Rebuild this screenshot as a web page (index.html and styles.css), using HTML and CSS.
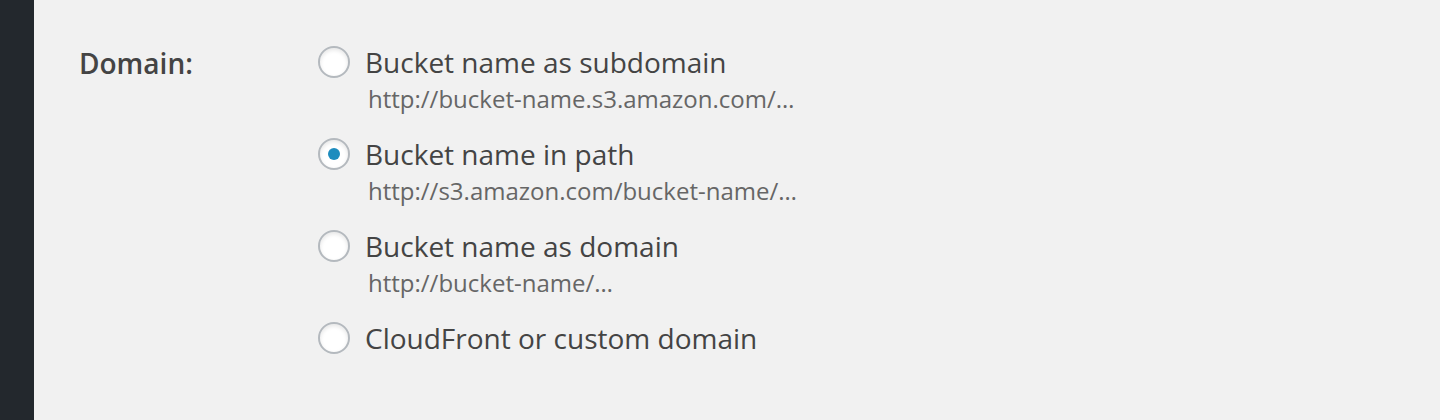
FILE: index.html
```html
<!DOCTYPE html>
<html lang="en">

<head>
  <meta charset="UTF-8">
  <meta name="viewport" content="width=device-width, initial-scale=1.0">
  <title>Domain settings</title>
  <link rel="stylesheet" href="styles.css">
</head>

<body>
  <div id="wrap">
    <div id="sidebar"></div>
    <div id="content">
      <div class="field">
        <div class="field-label">Domain:</div>
        <div class="options">
          <label class="option">
            <span class="row"><input type="radio" name="domain" class="radio"> Bucket name as subdomain</span>
            <span class="desc">http://bucket-name.s3.amazon.com/…</span>
          </label>
          <label class="option">
            <span class="row"><input type="radio" name="domain" class="radio" checked> Bucket name in path</span>
            <span class="desc">http://s3.amazon.com/bucket-name/…</span>
          </label>
          <label class="option">
            <span class="row"><input type="radio" name="domain" class="radio"> Bucket name as domain</span>
            <span class="desc">http://bucket-name/…</span>
          </label>
          <label class="option">
            <span class="row"><input type="radio" name="domain" class="radio"> CloudFront or custom domain</span>
          </label>
        </div>
      </div>
    </div>
  </div>
</body>

</html>
```

FILE: styles.css
```css
body {
  margin: 0;
  background-color: #f1f1f1;
  font-family: 'Open Sans', 'Noto Sans', sans-serif;
  color: #444;
}

#wrap {
  display: flex;
  height: 420px;
}

#sidebar {
  width: 34px;
  background-color: #23282d;
}

#content {
  flex: 1;
  padding: 46px 0 0 45px;
}

.field {
  display: flex;
}

.field-label {
  width: 239px;
  font-size: 28px;
  font-weight: 600;
  line-height: 34px;
  color: #444;
}

.options {
  display: flex;
  flex-direction: column;
  gap: 24px;
}

.option {
  display: flex;
  flex-direction: column;
}

.row {
  display: flex;
  align-items: center;
  height: 32px;
  font-size: 28px;
  line-height: 34px;
}

.radio {
  appearance: none;
  width: 32px;
  height: 32px;
  margin: 0 15px 0 0;
  border: 2px solid #b4b9be;
  border-radius: 50%;
  background-color: #fff;
  box-shadow: inset 0 2px 4px rgba(0, 0, 0, 0.1);
  display: flex;
  align-items: center;
  justify-content: center;
}

.radio:checked::before {
  content: '';
  width: 12px;
  height: 12px;
  border-radius: 50%;
  background-color: #1e8cbe;
}

.desc {
  margin-top: 6px;
  padding-left: 50px;
  font-size: 24px;
  line-height: 30px;
  color: #666;
}
```
